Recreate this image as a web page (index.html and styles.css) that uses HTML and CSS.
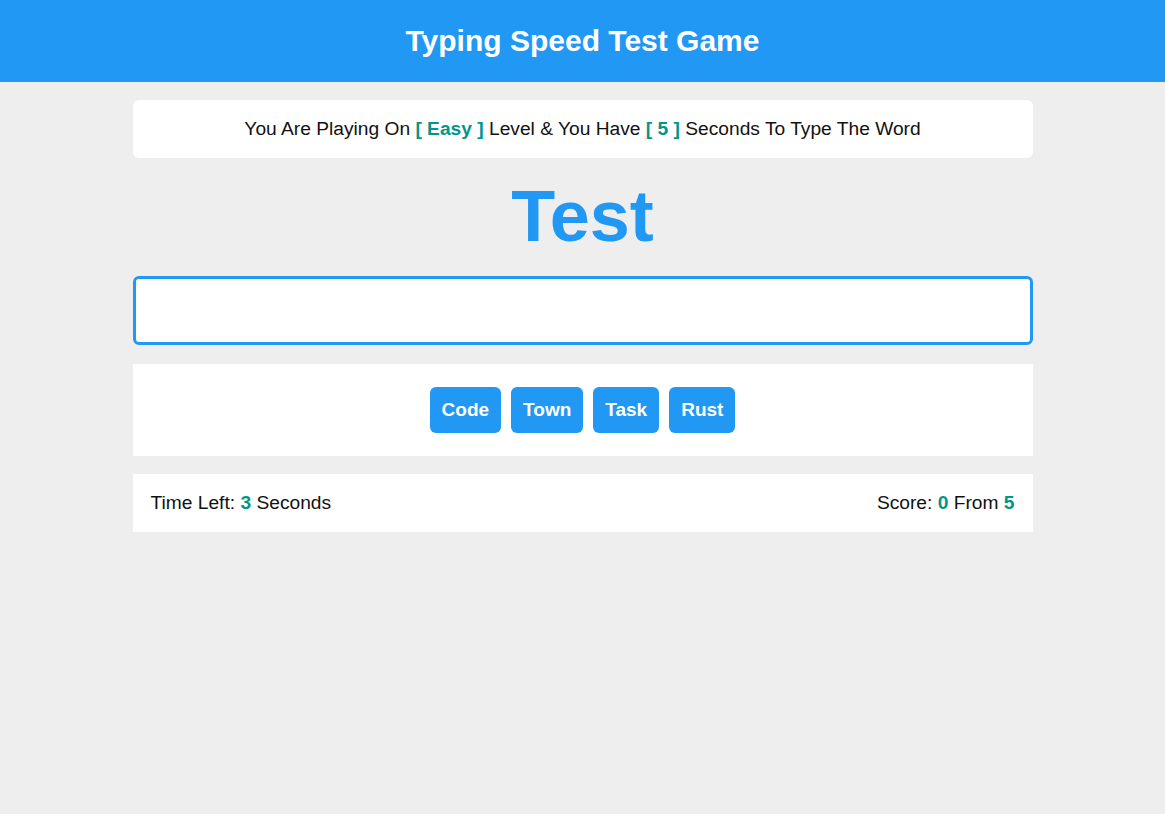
FILE: index.html
```html
<!DOCTYPE html>
<html lang="en">
<head>
  <meta charset="UTF-8">
  <meta name="viewport" content="width=device-width, initial-scale=1.0">
  <title>Typing Speed Test Game</title>
  <link rel="stylesheet" href="styles.css">
</head>
<body>
  <header class="name">Typing Speed Test Game</header>
  <div class="game">
    <div class="message">
      You Are Playing On <span class="lvl">[ Easy ]</span> Level &amp; You Have <span class="seconds">[ 5 ]</span> Seconds To Type The Word
    </div>
    <div class="the-word">Test</div>
    <input type="text" class="input" autofocus>
    <div class="upcoming-words">
      <div>Code</div>
      <div>Town</div>
      <div>Task</div>
      <div>Rust</div>
    </div>
    <div class="control">
      <div class="time">Time Left: <span>3</span> Seconds</div>
      <div class="score">Score: <span class="got">0</span> From <span class="total">5</span></div>
    </div>
  </div>
  <script>
    document.querySelector(".input").focus();
  </script>
</body>
</html>
```
FILE: styles.css
```css
* {
  box-sizing: border-box;
}
body {
  margin: 0;
  background-color: #eeeeee;
  font-family: "Liberation Sans", Arial, sans-serif;
  color: #111;
}
.name {
  background-color: #2198f3;
  color: white;
  text-align: center;
  font-weight: bold;
  font-size: 30px;
  height: 82px;
  line-height: 82px;
}
.game {
  width: 900px;
  margin: 18px auto;
}
.message {
  background-color: white;
  border-radius: 6px;
  text-align: center;
  font-size: 19.2px;
  height: 58px;
  line-height: 58px;
}
.message span {
  color: #009688;
  font-weight: bold;
}
.the-word {
  text-align: center;
  font-size: 72px;
  font-weight: bold;
  color: #2198f3;
  margin: 16px 0 18px;
  line-height: 84px;
}
.input {
  display: block;
  width: 100%;
  height: 69px;
  border: 3px solid #2198f3;
  border-radius: 6px;
  outline: none;
  text-align: center;
  font-size: 24px;
  caret-color: #2198f3;
  font-family: inherit;
}
.upcoming-words {
  background-color: white;
  margin-top: 19px;
  height: 92px;
  display: flex;
  justify-content: center;
  align-items: center;
  gap: 10px;
}
.upcoming-words div {
  background-color: #2198f3;
  color: white;
  font-weight: bold;
  font-size: 19px;
  padding: 0 12px;
  height: 46px;
  line-height: 46px;
  border-radius: 6px;
}
.control {
  background-color: white;
  margin-top: 18px;
  height: 58px;
  padding: 0 18px;
  display: flex;
  justify-content: space-between;
  align-items: center;
  font-size: 19.2px;
}
.control span {
  color: #009688;
  font-weight: bold;
}
```
